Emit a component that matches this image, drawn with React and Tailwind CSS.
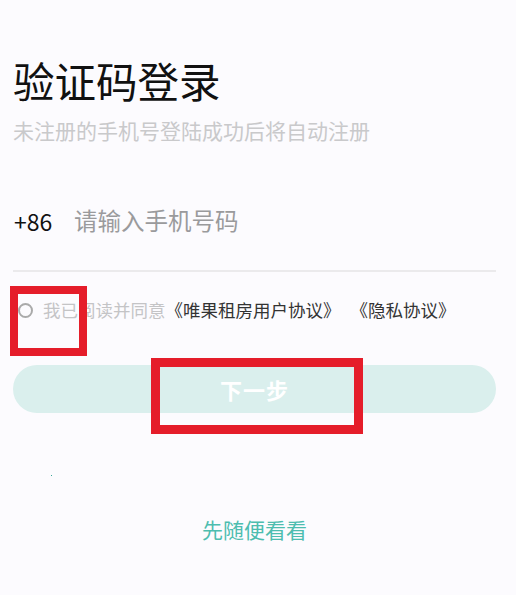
import React from "react";

export default function App() {
  const font = { fontFamily: '"Noto Sans CJK SC", "Noto Sans", sans-serif' };

  return (
    <div className="relative w-[516px] h-[595px] bg-[#fcfbfe] overflow-hidden" style={font}>
      <div className="px-[13px] pt-[52px]">
        <h1 className="text-[41.5px] leading-[56px] text-[#111] font-normal">验证码登录</h1>
        <p className="mt-[8px] text-[21px] leading-[28px] text-[#c9c9cb]">未注册的手机号登陆成功后将自动注册</p>

        <div className="mt-[54px] flex items-center h-[46px]">
          <span className="text-[23px] text-[#111] w-[61px] pl-[1px]">+86</span>
          <span className="text-[23.5px] text-[#9a9a9c]">请输入手机号码</span>
        </div>
        <div className="mt-[26px] mr-[7px] h-[2px] bg-[#ebeaec]" />

        <div className="mt-[26px] flex items-center text-[17.5px] leading-[24px] ml-[5px]">
          <span className="w-[15px] h-[15px] rounded-full border-[2px] border-[#aaa] mr-[10px]" />
          <span className="text-[#c4c4c6]">我已阅读并同意</span>
          <span className="text-[#333]">《唯果租房用户协议》</span>
          <span className="text-[#333] ml-[10px]">《隐私协议》</span>
        </div>

        <button className="mt-[43px] w-[483px] h-[48px] rounded-full bg-[#daefed] text-white text-[22px] font-bold tracking-[1px]">
          下一步
        </button>

        <div className="mt-[101px] text-center text-[21px] text-[#4dbdaf] pr-[7px]">先随便看看</div>
      </div>

      <span className="absolute left-[51px] top-[475px] w-[1px] h-[1px] bg-[#3aa89a]" />

      <div className="absolute left-[10px] top-[286px] w-[77px] h-[70px] border-[8px] border-[#e51d2a]" />
      <div className="absolute left-[151px] top-[358px] w-[212px] h-[76px] border-[9px] border-[#e51d2a]" />
    </div>
  );
}
